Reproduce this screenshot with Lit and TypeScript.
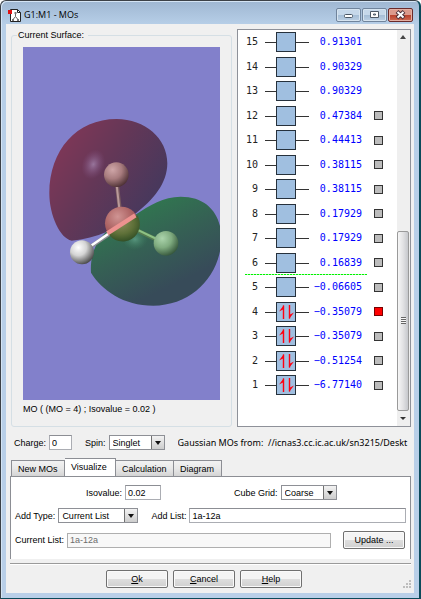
import { LitElement, html, svg, css } from "lit";
import { customElement, property, state } from "lit/decorators.js";
import { classMap } from "lit/directives/class-map.js";

interface Orbital {
  n: number;
  energy: string;
  occupied: boolean;
  hasSurface: boolean;
}

const ENERGIES = [
  "0.91301", "0.90329", "0.90329", "0.47384", "0.44413", "0.38115", "0.38115",
  "0.17929", "0.17929", "0.16839", "−0.06605", "−0.35079", "−0.35079", "−0.51254", "−6.77140",
];

const ORBITALS: Orbital[] = ENERGIES.map((energy, i) => ({
  n: 15 - i,
  energy,
  occupied: 15 - i <= 4,
  hasSurface: 15 - i <= 12,
}));

@customElement("surface-view")
class SurfaceView extends LitElement {
  static styles = css`
    :host { display: block; }
    .scene { display: block; width: 100%; height: auto; background: #8280cb; }
  `;

  render() {
    return html`
      <svg class="scene" viewBox="0 0 197 353" role="img" aria-label="Molecular orbital surface">
        <defs>
          <linearGradient id="redLobe" x1="0.1" y1="0.15" x2="0.85" y2="0.65">
            <stop offset="0" stop-color="#7f3757" />
            <stop offset="0.5" stop-color="#633757" />
            <stop offset="1" stop-color="#49385c" />
          </linearGradient>
          <linearGradient id="greenLobe" x1="0.25" y1="0.1" x2="0.65" y2="0.8">
            <stop offset="0" stop-color="#30794f" />
            <stop offset="0.5" stop-color="#356054" />
            <stop offset="1" stop-color="#374b59" />
          </linearGradient>
          <radialGradient id="redGlow">
            <stop offset="0" stop-color="#a080a8" stop-opacity="0.85" />
            <stop offset="1" stop-color="#805080" stop-opacity="0" />
          </radialGradient>
          <radialGradient id="greenGlow">
            <stop offset="0" stop-color="#60a088" stop-opacity="0.8" />
            <stop offset="1" stop-color="#408060" stop-opacity="0" />
          </radialGradient>
          <radialGradient id="pinkAtom" cx="0.35" cy="0.3" r="0.75">
            <stop offset="0" stop-color="#cfa6a8" />
            <stop offset="0.5" stop-color="#a87c7e" />
            <stop offset="1" stop-color="#4c3034" />
          </radialGradient>
          <radialGradient id="whiteAtom" cx="0.35" cy="0.3" r="0.75">
            <stop offset="0" stop-color="#ffffff" />
            <stop offset="0.45" stop-color="#d4d4d4" />
            <stop offset="1" stop-color="#444444" />
          </radialGradient>
          <radialGradient id="greenAtom" cx="0.35" cy="0.3" r="0.75">
            <stop offset="0" stop-color="#abd4ac" />
            <stop offset="0.5" stop-color="#80ac80" />
            <stop offset="1" stop-color="#34553a" />
          </radialGradient>
          <radialGradient id="coreRed" cx="0.38" cy="0.3" r="0.75">
            <stop offset="0" stop-color="#cf9493" />
            <stop offset="0.5" stop-color="#b06868" />
            <stop offset="1" stop-color="#8a4048" />
          </radialGradient>
          <radialGradient id="coreGreen" cx="0.4" cy="0.3" r="0.75">
            <stop offset="0" stop-color="#8a8c5c" />
            <stop offset="0.55" stop-color="#5e7038" />
            <stop offset="1" stop-color="#2c4a22" />
          </radialGradient>
        </defs>
        <g transform="translate(-3 53) scale(0.3333)">
          <path fill="url(#redLobe)" d="M155 422C120 416 88 345 88 280C88 150 170 57 290 57C375 57 442 115 442 190C442 250 400 300 345 342C300 385 230 415 155 422Z" />
          <ellipse cx="220" cy="193" rx="34" ry="46" transform="rotate(20 220 193)" fill="url(#redGlow)" />
          <path fill="url(#greenLobe)" d="M213 518C210 470 225 430 250 404C275 378 310 365 345 345C390 315 430 290 482 290C560 290 602 340 604 410C606 520 520 617 400 617C310 617 245 570 213 518Z" />
          <ellipse cx="345" cy="418" rx="38" ry="32" fill="url(#greenGlow)" />
          <path stroke="#77595f" stroke-width="12" d="M291 255L299 325" />
          <path stroke="#b99a9a" stroke-width="6" d="M290 255L298 325" />
          <circle cx="289" cy="224" r="37" fill="url(#pinkAtom)" />
          <path stroke="#567c50" stroke-width="12" d="M345 388L410 419" />
          <path stroke="#8dc284" stroke-width="6" d="M345 386L410 417" />
          <circle cx="438" cy="430" r="37" fill="url(#greenAtom)" />
          <path stroke="#8c8c92" stroke-width="12" d="M212 440L272 399" />
          <path stroke="#ffffff" stroke-width="7" d="M212 438L272 397" />
          <circle cx="186" cy="457" r="36" fill="url(#whiteAtom)" />
          <circle cx="305" cy="370" r="50" fill="url(#coreRed)" />
          <path fill="url(#coreGreen)" d="M264 400L352 346A50 50 0 0 1 264 400Z" />
          <path stroke="#ec9290" stroke-width="13" d="M262 400L346 346" />
        </g>
      </svg>
    `;
  }
}

@customElement("orbital-list")
class OrbitalList extends LitElement {
  @property({ attribute: false }) orbitals: Orbital[] = [];
  @property({ type: Number }) selected = 0;

  static styles = css`
    :host {
      display: flex;
      box-sizing: border-box;
      background: #fff;
      border: 1px solid #8e9199;
      font: 10px/12px "DejaVu Sans Mono", monospace;
    }
    .rows {
      flex: 1;
      display: grid;
      grid-auto-rows: 24px 25px;
      align-content: start;
      margin: 0;
      padding: 0;
      list-style: none;
    }
    .row {
      position: relative;
      display: grid;
      grid-template-columns: 20px 44px 53px 9px;
      align-items: center;
    }
    .num { text-align: right; color: #222; }
    .level { margin-left: 7px; width: 44px; height: 20px; display: block; }
    .energy { margin-left: 7px; text-align: right; color: #00f; width: 53px; }
    .pick {
      appearance: none;
      box-sizing: border-box;
      width: 9px;
      height: 9px;
      margin: 0 0 0 19px;
      border: 1px solid #333;
      background: #bcbcbc;
    }
    .pick:checked { background: #f00; border-color: #700; }
    .gap::after {
      content: "";
      position: absolute;
      left: 7px;
      right: 30px;
      bottom: 0;
      height: 1px;
      background: repeating-linear-gradient(90deg, #00f000 0 2px, #b0ffb0 2px 3px);
    }
    .bar {
      width: 13px;
      display: flex;
      flex-direction: column;
      background: #efefef;
    }
    .arrow { height: 15px; display: block; width: 13px; }
    .track { flex: 187; }
    .thumb {
      flex: 179;
      display: flex;
      align-items: center;
      justify-content: center;
      margin-right: 1px;
      border: 1px solid #9a9a9a;
      border-radius: 2px;
      background: linear-gradient(90deg, #f6f6f6, #e2e2e4 50%, #c6c8cc);
    }
    .grip { width: 5px; height: 7px; background: repeating-linear-gradient(#666 0 1px, #f6f6f6 1px 2px); }
  `;

  private pick(n: number) {
    this.dispatchEvent(new CustomEvent("pick", { detail: n }));
  }

  render() {
    return html`
      <ul class="rows">
        ${this.orbitals.map((o) => html`
          <li class=${classMap({ row: true, gap: o.n === 6 })}>
            <span class="num">${o.n}</span>
            <svg class="level" viewBox="0 0 44 20" aria-hidden="true">
              <path stroke="#333" d="M0 10.5H44" />
              <rect x="11.5" y="0.5" width="19" height="19" fill="#a0bfe0" stroke="#26313c" />
              ${o.occupied ? svg`
                <path fill="none" stroke="#ff0010" stroke-width="1.4" d="M18.5 17V3.5M24.5 3V16.5" />
                <path fill="#ff0010" d="M19 3L14 9.5L19 7ZM24 17L29 10.5L24 13Z" />` : ""}
            </svg>
            <span class="energy">${o.energy}</span>
            ${o.hasSurface ? html`
              <input class="pick" type="checkbox" aria-label="Show orbital ${o.n}"
                .checked=${o.n === this.selected} @change=${() => this.pick(o.n)} />` : ""}
          </li>`)}
      </ul>
      <div class="bar" aria-hidden="true">
        <svg class="arrow" viewBox="0 0 13 15"><path fill="#444" d="M3 9L6 5L9 9Z" /></svg>
        <div class="track"></div>
        <div class="thumb"><span class="grip"></span></div>
        <svg class="arrow" viewBox="0 0 13 15"><path fill="#333" d="M3 6H9L6 9Z" /></svg>
      </div>
    `;
  }
}

@customElement("app-root")
class AppRoot extends LitElement {
  @state() private tab = "Visualize";
  @state() private selected = 4;

  static styles = css`
    :host {
      display: block;
      font: 9px/12px "Liberation Sans", Arial, sans-serif;
      color: #000;
    }
    * { box-sizing: border-box; }
    .window {
      display: flex;
      flex-direction: column;
      min-height: 100vh;
      padding: 0 5px 5px;
      border: 1px solid #3c4147;
      border-right: 2px solid #0b4a5a;
      border-bottom: 2px solid #0b4a5a;
      border-radius: 6px 6px 0 0;
      background: linear-gradient(#9fb7d2, #b7cfe8 24px, #b9cfe8);
      box-shadow: inset 1px 1px #d4e4f4;
    }
    .titlebar {
      display: flex;
      align-items: center;
      height: 23px;
      padding: 5px 1px 0 2px;
    }
    .logo { width: 13px; height: 13px; margin-right: 3px; }
    .title {
      flex: 1;
      margin: 0;
      font: 9px/12px "Open Sans", sans-serif;
    }
    .controls { display: flex; gap: 1px; }
    .control {
      width: 25px;
      height: 14px;
      padding: 0;
      border: 1px solid #70849c;
      border-radius: 2px;
      background: linear-gradient(#c6d8ea 50%, #a4bdd6 50%, #bcd0e4);
      box-shadow: inset 0 0 0 1px #d6e4f0;
    }
    .control svg { display: block; width: 23px; height: 12px; }
    .close {
      border-color: #6a2a2a;
      background: linear-gradient(#dc9a8c 50%, #b8402c 50%, #cf6c54);
      box-shadow: inset 0 0 0 1px #e4b0a4;
    }
    .client {
      flex: 1;
      display: flex;
      flex-direction: column;
      padding: 5px 3px 5px 4px;
      background: #f0f0f0;
    }
    .top {
      display: grid;
      grid-template-columns: minmax(0, 1fr) 174px;
      gap: 5px;
      margin-left: 1px;
    }
    .group {
      min-width: 0;
      margin: 0;
      padding: 6px 11px 8px;
      border: 1px solid #d5dfe5;
      border-radius: 3px;
    }
    .legend { padding: 0 4px 0 1px; margin-left: -6px; height: 12px; }
    .caption { margin: 0; line-height: 18px; }
    .line {
      display: flex;
      align-items: center;
      white-space: nowrap;
    }
    .state { margin: 8px 0 0 4px; height: 15px; }
    .field {
      height: 15px;
      min-width: 0;
      padding: 0 3px 0 2px;
      border: 1px solid #abadb3;
      border-top-color: #8c8e94;
      background: #fff;
      color: #000;
      font: inherit;
      border-radius: 0;
    }
    .field:disabled { background: #f8f8f8; color: #6d6d6d; border-color: #afafaf; }
    .combo { position: relative; display: flex; }
    .combo::after {
      content: "";
      position: absolute;
      right: 4px;
      top: 6px;
      border: 3px solid transparent;
      border-top: 4px solid #111;
      border-bottom: 0;
      pointer-events: none;
    }
    .select {
      appearance: none;
      width: 100%;
      height: 15px;
      padding: 0 14px 0 3px;
      border: 1px solid #8e9096;
      border-radius: 0;
      color: #000;
      font: inherit;
      background: linear-gradient(90deg, #707070, #707070) right 12px top / 1px 100% no-repeat,
        linear-gradient(#f2f2f2, #cdcdcd) right / 13px 100% no-repeat, #fff;
    }
    .short { width: 56px; }
    .long { width: 80px; }
    .narrow { width: 23px; }
    .medium { width: 36px; }
    .grow { flex: 1; }
    .lab { margin-right: 3px; }
    .source {
      flex: 1;
      min-width: 0;
      overflow: hidden;
      font: 9px/14px "Noto Sans", sans-serif;
      white-space: pre;
    }
    .next { margin-left: 13px; }
    .tabs {
      display: flex;
      align-items: flex-end;
      height: 19px;
      margin: 8px 0 -1px;
      padding-left: 1px;
    }
    .tab {
      height: 17px;
      padding: 0 6px;
      border: 1px solid #8c8e94;
      border-left-width: 0;
      background: linear-gradient(#f2f2f2, #e8e8e8 50%, #d4d4d4);
      color: #000;
      font: inherit;
      text-align: left;
    }
    .tab:first-child { border-left-width: 1px; }
    .on {
      height: 19px;
      padding-bottom: 2px;
      background: #fff;
      border-bottom-color: #fff;
    }
    .t1 { width: 54px; }
    .t2 { width: 51px; }
    .t3 { width: 58px; }
    .t4 { width: 48px; }
    .panel {
      flex: 1;
      display: flex;
      flex-direction: column;
      gap: 8px;
      padding: 8px 4px 10px 4px;
      background: #fff;
      border: 1px solid #8c8e94;
      border-bottom: 0;
    }
    .iso { padding-left: 71px; }
    .cube { margin-left: 73px; }
    .button {
      height: 18px;
      width: 62px;
      padding: 0;
      border: 1px solid #707070;
      border-radius: 2px;
      background: linear-gradient(#f4f4f4 50%, #dedede 50%, #d0d0d0);
      box-shadow: inset 0 0 0 1px #fafafa;
      color: #000;
      font: inherit;
    }
    .update { margin: 0 1px 0 12px; }
    .rule {
      height: 2px;
      width: 100%;
      margin: 4px 0 5px;
      border: 0;
      border-top: 1px solid #9a9a9a;
      border-bottom: 1px solid #fff;
    }
    .footer { display: grid; grid-template-columns: 1fr auto 1fr; }
    .actions { display: flex; gap: 5px; padding-right: 13px; }
    .sizer { width: 8px; height: 8px; align-self: end; justify-self: end; }
  `;

  private tabs = ["New MOs", "Visualize", "Calculation", "Diagram"];

  render() {
    return html`
      <main class="window">
        <header class="titlebar">
          <svg class="logo" viewBox="0 0 13 13" aria-hidden="true">
            <path fill="#fff" stroke="#222" d="M2.5 0.5H9.5L12.5 3.5V12.5H2.5Z" />
            <path fill="none" stroke="#222" d="M9.5 0.5V3.5H12.5" />
            <path fill="none" stroke="#666" d="M7.5 4V7.5M7.5 7.5L5 10.5M7.5 7.5L10 10.5" />
            <path fill="#777" d="M4 10H6V12H4ZM9 10H11V12H9ZM6.5 3H8.5V5H6.5Z" />
            <path fill="#e01010" d="M0 1H4V5H0Z" />
          </svg>
          <h1 class="title">G1:M1 - MOs</h1>
          <div class="controls">
            <button class="control" aria-label="Minimize">
              <svg viewBox="0 0 23 12"><rect x="7.5" y="5.5" width="8" height="3" rx="1" fill="#fff" stroke="#4c5866" /></svg>
            </button>
            <button class="control" aria-label="Maximize">
              <svg viewBox="0 0 23 12"><path fill="#fff" fill-rule="evenodd" stroke="#4c5866" d="M7.5 2.5H15.5V8.5H7.5ZM10.5 5H12.5V6H10.5Z" /></svg>
            </button>
            <button class="control close" aria-label="Close">
              <svg viewBox="0 0 23 12">
                <path stroke="#4c3038" stroke-width="4" d="M8 2.5L15 9M15 2.5L8 9" />
                <path stroke="#fff" stroke-width="2" d="M8.5 3L14.5 8.5M14.5 3L8.5 8.5" />
              </svg>
            </button>
          </div>
        </header>

        <section class="client">
          <div class="top">
            <fieldset class="group">
              <legend class="legend">Current Surface:</legend>
              <surface-view></surface-view>
              <p class="caption">MO ( (MO = 4) ; Isovalue = 0.02 )</p>
            </fieldset>
            <orbital-list .orbitals=${ORBITALS} .selected=${this.selected}
              @pick=${(e: CustomEvent<number>) => (this.selected = e.detail)}></orbital-list>
          </div>

          <div class="line state">
            <label class="lab" for="charge">Charge:</label>
            <input class="field narrow" id="charge" value="0" />
            <label class="lab next" for="spin">Spin:</label>
            <span class="combo short"><select class="select" id="spin"><option>Singlet</option></select></span>
            <span class="source next">Gaussian MOs from:  //icnas3.cc.ic.ac.uk/sn3215/Deskt</span>
          </div>

          <div class="tabs" role="tablist">
            ${this.tabs.map((t, i) => html`
              <button role="tab" aria-selected=${t === this.tab}
                class=${classMap({ tab: true, on: t === this.tab, ["t" + (i + 1)]: true })}
                @click=${() => (this.tab = t)}>${t}</button>`)}
          </div>

          <div class="panel" role="tabpanel">
            <div class="line iso">
              <label class="lab" for="iso">Isovalue:</label>
              <input class="field medium" id="iso" value="0.02" />
              <label class="lab cube" for="cube">Cube Grid:</label>
              <span class="combo short"><select class="select" id="cube"><option>Coarse</option></select></span>
            </div>
            <div class="line">
              <label class="lab" for="type">Add Type:</label>
              <span class="combo long"><select class="select" id="type"><option>Current List</option></select></span>
              <label class="lab next" for="add">Add List:</label>
              <input class="field grow" id="add" value="1a-12a" />
            </div>
            <div class="line">
              <label class="lab" for="current">Current List:</label>
              <input class="field grow" id="current" value="1a-12a" disabled />
              <button class="button update">Update ...</button>
            </div>
          </div>

          <hr class="rule" />

          <footer class="footer">
            <span></span>
            <div class="actions">
              <button class="button"><u>O</u>k</button>
              <button class="button"><u>C</u>ancel</button>
              <button class="button"><u>H</u>elp</button>
            </div>
            <svg class="sizer" viewBox="0 0 8 8" aria-hidden="true">
              <path fill="#bdbdbd" d="M6 0H8V2H6ZM3 3H5V5H3ZM6 3H8V5H6ZM0 6H2V8H0ZM3 6H5V8H3ZM6 6H8V8H6Z" />
            </svg>
          </footer>
        </section>
      </main>
    `;
  }
}
